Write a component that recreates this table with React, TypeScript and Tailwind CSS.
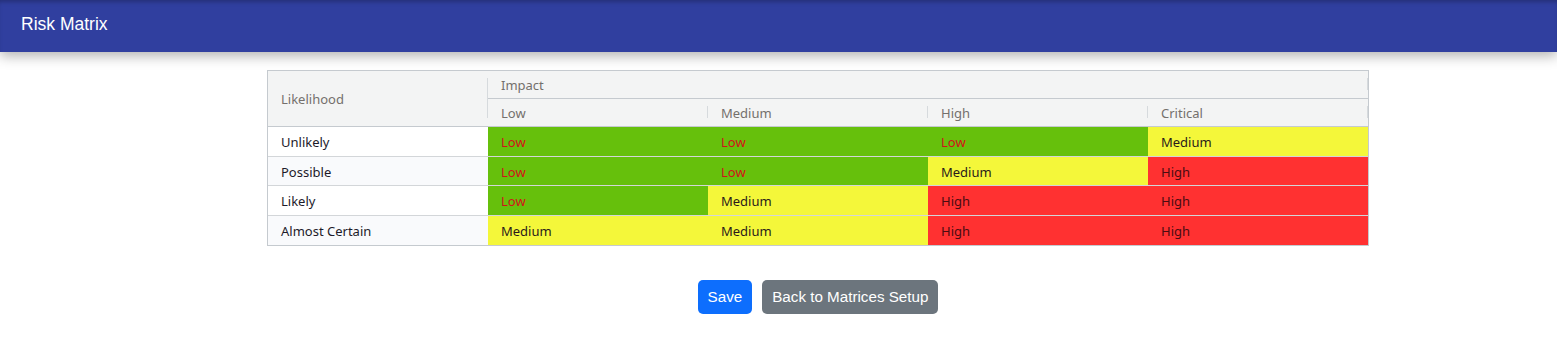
import React from "react";

type Level = "Low" | "Medium" | "High";

const impacts = ["Low", "Medium", "High", "Critical"];

const rows: { label: string; cells: Level[] }[] = [
  { label: "Unlikely", cells: ["Low", "Low", "Low", "Medium"] },
  { label: "Possible", cells: ["Low", "Low", "Medium", "High"] },
  { label: "Likely", cells: ["Low", "Medium", "High", "High"] },
  { label: "Almost Certain", cells: ["Medium", "Medium", "High", "High"] },
];

const levelClass: Record<Level, string> = {
  Low: "bg-[#66c00c] text-[#d2121b]",
  Medium: "bg-[#f4f73a] text-[#2a1a1a]",
  High: "bg-[#ff3131] text-[#4a0c12]",
};

function HeaderCell({ children, className = "" }: { children?: React.ReactNode; className?: string }) {
  return (
    <div className={`relative flex items-center pl-[13px] ${className}`}>
      {children}
      <span className="absolute right-0 top-[7px] bottom-[8px] w-px bg-[#d6dadd]" />
    </div>
  );
}

export default function App() {
  return (
    <div className="min-h-[344px] bg-white font-['Noto_Sans',sans-serif]">
      {/* Top bar */}
      <header className="h-[52px] bg-[#303f9f] flex items-center px-[21px] shadow-[0_4px_12px_rgba(0,0,0,0.3),inset_0_4px_4px_-2px_rgba(0,0,0,0.25)]">
        <h1 className="text-white text-[17.5px] font-['Liberation_Sans',Arial,sans-serif] pb-[4px]">Risk Matrix</h1>
      </header>

      <main className="ml-[267px] w-[1102px] pt-[18px]">
        {/* Matrix grid */}
        <div className="border border-[#c5cacf] text-[13px]">
          <div className="grid grid-cols-[220px_220px_220px_220px_220px] grid-rows-[28px_27px] bg-[#f3f4f4] text-[#74706c] border-b border-[#c5cacf]">
            <HeaderCell className="row-span-2 pt-[3px]">Likelihood</HeaderCell>
            <HeaderCell className="col-span-4 border-b border-[#c5cacf] pt-[3px]">Impact</HeaderCell>
            {impacts.map((i) => (
              <HeaderCell key={i} className="pt-[2px]">
                {i}
              </HeaderCell>
            ))}
          </div>

          {rows.map((row, idx) => (
            <div
              key={row.label}
              className={`grid grid-cols-[220px_220px_220px_220px_220px] h-[29.5px] ${
                idx < rows.length - 1 ? "border-b border-[#d3d6d9]" : ""
              }`}
            >
              <div className={`flex items-center pl-[13px] pt-[3px] text-[#1d1b2a] ${idx % 2 ? "bg-[#f9fafc]" : "bg-white"}`}>
                {row.label}
              </div>
              {row.cells.map((c, ci) => (
                <div key={ci} className={`flex items-center pl-[13px] pt-[3px] ${levelClass[c]}`}>
                  {c}
                </div>
              ))}
            </div>
          ))}
        </div>

        {/* Actions */}
        <div className="flex justify-center gap-[10px] mt-[34px] font-['Liberation_Sans',Arial,sans-serif] text-[15.2px]">
          <button type="button" className="h-[34px] px-[10px] rounded-[5px] bg-[#0d6efd] text-white">
            Save
          </button>
          <button type="button" className="h-[34px] px-[10px] rounded-[5px] bg-[#6c757d] text-white">
            Back to Matrices Setup
          </button>
        </div>
      </main>
    </div>
  );
}
